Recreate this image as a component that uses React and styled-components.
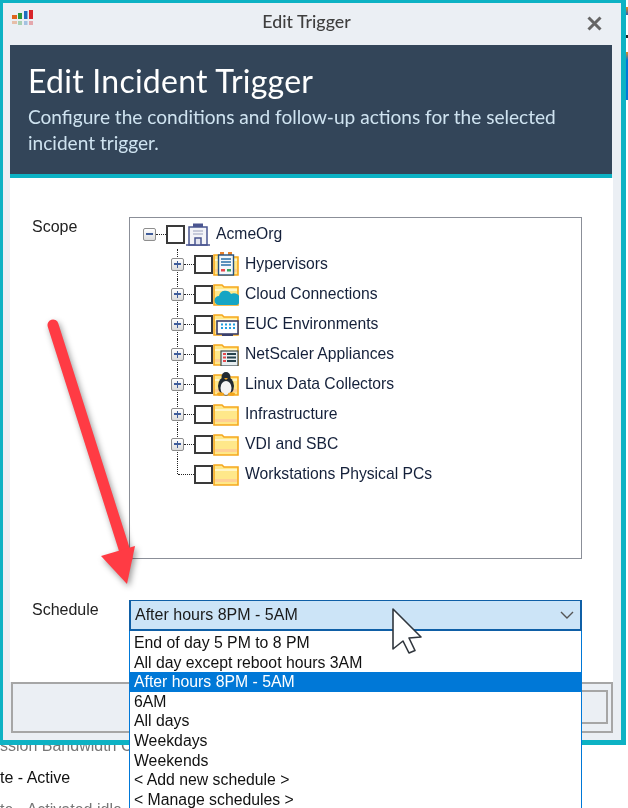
import React from "react";
import styled, { createGlobalStyle } from "styled-components";

const Global = createGlobalStyle`
  html, body { margin: 0; padding: 0; background: #fff; overflow: hidden; }
  * { box-sizing: border-box; }
`;

const Page = styled.div`
  position: relative;
  width: 628px;
  height: 808px;
  overflow: hidden;
  background: #fff;
  font-family: "Liberation Sans", Arial, sans-serif;
  filter: blur(0.4px);
`;

const EdgeSliver = styled.div`
  position: absolute;
  top: 0;
  right: 0;
  width: 2px;
  height: 100px;
  background: linear-gradient(
    to bottom,
    #fff 0, #fff 7px, #e88a1c 7px, #2a5fb0 15px, #fff 15px,
    #fff 35px, #222 35px, #222 38px, #fff 38px,
    #fff 52px, #e88a1c 52px, #0078d7 60px, #0078d7 100px
  );
`;

const Window = styled.div`
  position: relative;
  z-index: 1;
  width: 626px;
  height: 745px;
  border: solid #0db2c4;
  border-width: 3px 5px 5px 3px;
  background: #ebeff4;
  display: flex;
  flex-direction: column;
`;

const TitleBar = styled.div`
  height: 42px;
  flex: none;
  display: flex;
  align-items: center;
  padding: 0 19px 0 8px;
`;

const Logo = styled.svg`
  width: 23px;
  height: 20px;
  flex: none;
  margin-bottom: 12px;
`;

const WindowTitle = styled.div`
  flex: 1;
  text-align: center;
  padding: 0 8px 6px 0;
  font-family: Lato, sans-serif;
  font-size: 17.8px;
  font-weight: 500;
  color: #3f3f3f;
`;

const Close = styled.svg`
  width: 15px;
  height: 15px;
  flex: none;
  margin-bottom: 2px;
`;

const Banner = styled.header`
  flex: none;
  height: 133px;
  margin: 0 9px 0 7px;
  padding: 17px 18px 0;
  background: #334559;
  border-bottom: 4px solid #0db2c4;
`;

const BannerTitle = styled.h1`
  margin: 0;
  font-family: Lato, sans-serif;
  font-size: 32px;
  letter-spacing: 0.25px;
  line-height: 38px;
  font-weight: 400;
  color: #fff;
`;

const BannerText = styled.p`
  margin: 4px 0 0;
  width: 560px;
  font-family: Lato, sans-serif;
  font-size: 19.08px;
  line-height: 26px;
  color: #cfe3f0;
`;

const Content = styled.main`
  flex: 1;
  margin: 0 8px 0 7px;
  padding: 39px 0 0 22px;
  background: #fff;
  display: grid;
  grid-template-columns: 97px 453px;
  grid-template-rows: 342px 31px;
  row-gap: 41px;
  align-content: start;
`;

const FieldLabel = styled.div`
  font-size: 16px;
  line-height: 18px;
  color: #222;
  padding-top: ${(p) => p.$top}px;
`;

const Tree = styled.div`
  border: 1px solid #8b8f98;
  padding-top: 1px;
  background: #fff;
`;

const Row = styled.div`
  position: relative;
  height: 30px;
  display: flex;
  align-items: center;
  padding-left: ${(p) => (p.$root ? 13 : 41)}px;
  &::before {
    content: ${(p) => (p.$root ? "none" : '""')};
    position: absolute;
    left: 47px;
    top: 0;
    height: ${(p) => (p.$last ? "15px" : "30px")};
    border-left: 1px dotted #222;
  }
`;

const Expander = styled.span`
  position: relative;
  z-index: 1;
  width: 13px;
  height: 13px;
  flex: none;
  border: 1px solid #8e8e8e;
  border-radius: 2px;
  background: linear-gradient(#fff, #dcdcdc);
  display: flex;
  align-items: center;
  justify-content: center;
  &::before {
    content: "";
    position: absolute;
    width: 7px;
    height: 1.6px;
    background: #3f5c9a;
  }
  &::after {
    content: ${(p) => (p.$open ? "none" : '""')};
    position: absolute;
    width: 1.6px;
    height: 7px;
    background: #3f5c9a;
  }
`;

const Dots = styled.span`
  width: ${(p) => p.$w}px;
  flex: none;
  margin-left: ${(p) => p.$offset || 0}px;
  border-top: 1px dotted #222;
`;

const Check = styled.span`
  width: 19px;
  height: 19px;
  flex: none;
  border: 2px solid #3a3a3a;
  background: #fff;
`;

const IconSlot = styled.svg`
  width: ${(p) => (p.$root ? 24 : 26)}px;
  height: 24px;
  flex: none;
  margin-left: ${(p) => (p.$root ? 1 : 0)}px;
`;

const NodeLabel = styled.span`
  margin-left: ${(p) => (p.$root ? 6 : 6)}px;
  font-size: 15.7px;
  color: #14203a;
  white-space: nowrap;
`;

const SelectWrap = styled.div`
  position: relative;
  z-index: 2;
`;

const Select = styled.div`
  height: 31px;
  border: 2px solid #0f5fa6;
  border-top-width: 1px;
  background: #cce4f7;
  display: flex;
  align-items: center;
  justify-content: space-between;
  padding: 0 6px 0 4px;
  font-size: 16px;
  color: #1a1a1a;
`;

const Chevron = styled.svg`
  width: 14px;
  height: 8px;
  flex: none;
`;

const DropList = styled.ul`
  position: absolute;
  top: 31px;
  left: 0;
  width: 453px;
  height: 190px;
  margin: 0;
  padding: 2px 0 0;
  list-style: none;
  background: #fff;
  border: solid #0078d7;
  border-width: 0 1px 0 1px;
`;

const DropItem = styled.li`
  height: 19.6px;
  line-height: 19.6px;
  padding-left: 4px;
  font-size: 15.8px;
  white-space: nowrap;
  color: ${(p) => (p.$active ? "#fff" : "#111")};
  background: ${(p) => (p.$active ? "#0078d7" : "transparent")};
`;

const Footer = styled.footer`
  flex: none;
  height: 51px;
  margin: 0 8px 7px 8px;
  border: 2px solid #a6a6a6;
  padding: 6px 3px 7px 200px;
  display: flex;
`;

const FooterButton = styled.div`
  flex: 1;
  border: 2px solid #a6a6a6;
  background: #ebeff4;
`;

const Behind = styled.div`
  margin-top: -15px;
  font-size: 16px;
  line-height: 32px;
`;

const BehindLine = styled.div`
  height: 32px;
  color: ${(p) => p.$color};
  white-space: nowrap;
`;

const RedArrow = styled.svg`
  position: absolute;
  z-index: 3;
  left: 40px;
  top: 310px;
  width: 110px;
  height: 290px;
  filter: drop-shadow(2px 3px 3px rgba(0, 0, 0, 0.4));
`;

const Pointer = styled.svg`
  position: absolute;
  z-index: 4;
  left: 390px;
  top: 606px;
  width: 36px;
  height: 50px;
`;

const Folder = () => (
  <>
    <path d="M1 7V3h8l2 2h14v18H1z" fill="#ffe88a" stroke="#f6a81e" strokeWidth="1.6" />
    <rect x="2" y="7" width="22" height="2" fill="#fff6c8" />
    <rect x="2" y="17" width="22" height="3" fill="#ffcf94" />
  </>
);

const Overlays = {
  plain: null,
  hyper: (
    <>
      <rect x="7" y="0" width="4" height="3" fill="#e8802a" />
      <rect x="15" y="0" width="4" height="3" fill="#e8802a" />
      <rect x="5.5" y="3" width="15" height="20" fill="#f4f8fb" stroke="#24507e" strokeWidth="1.4" />
      <path d="M8 7h10M8 10h10M8 13h10" stroke="#2a6fa8" strokeWidth="1.4" />
      <rect x="8" y="17" width="4" height="2.5" fill="#e5484d" />
      <rect x="14" y="17" width="4" height="2.5" fill="#35a55b" />
    </>
  ),
  cloud: (
    <path d="M6 23a4.5 4.5 0 0 1 0-9 6.5 6.5 0 0 1 12-2 5.5 5.500 0 0 1 6 11z" fill="#16a5c4" />
  ),
  euc: (
    <>
      <rect x="4" y="9" width="21" height="13" fill="#fdfdff" stroke="#3a3f6b" strokeWidth="1.6" />
      <path d="M8 12.5h2M12 12.5h2M16 12.5h2M20 12.5h2M8 16h2M12 16h2M16 16h2M20 16h2" stroke="#1f9fe0" strokeWidth="2" />
      <rect x="9" y="22" width="11" height="2" fill="#3a3f6b" />
    </>
  ),
  net: (
    <>
      <rect x="8" y="9" width="17" height="15" fill="#e8eef0" stroke="#3d4a4f" strokeWidth="1.2" />
      <path d="M10 12h3M10 15.5h3M10 19h3" stroke="#e5484d" strokeWidth="2" />
      <path d="M14 12h9M14 15.5h9M14 19h9" stroke="#26424c" strokeWidth="2" />
    </>
  ),
  linux: (
    <>
      <ellipse cx="13" cy="14" rx="8" ry="9.5" fill="#222b33" />
      <ellipse cx="13" cy="5" rx="4.500" ry="5" fill="#222b33" />
      <ellipse cx="13" cy="16" rx="5.5" ry="7" fill="#f4f4f4" />
      <path d="M11 6h4l-2 2z" fill="#f2a51f" />
      <ellipse cx="7.5" cy="22" rx="3.5" ry="1.8" fill="#f2a51f" />
      <ellipse cx="18.5" cy="22" rx="3.5" ry="1.8" fill="#f2a51f" />
    </>
  ),
};

const nodes = [
  ["Hypervisors", "hyper"],
  ["Cloud Connections", "cloud"],
  ["EUC Environments", "euc"],
  ["NetScaler Appliances", "net"],
  ["Linux Data Collectors", "linux"],
  ["Infrastructure", "plain"],
  ["VDI and SBC", "plain"],
  ["Workstations Physical PCs", "plain"],
];

const schedules = [
  "End of day 5 PM to 8 PM",
  "All day except reboot hours 3AM",
  "After hours 8PM - 5AM",
  "6AM",
  "All days",
  "Weekdays",
  "Weekends",
  "< Add new schedule >",
  "< Manage schedules >",
];

export default function App() {
  return (
    <Page>
      <Global />
      <EdgeSliver />
      <Window>
        <TitleBar>
          <Logo viewBox="0 0 23 20">
            <rect x="1" y="7" width="5" height="4" fill="#e0651c" />
            <rect x="7" y="5" width="4" height="6" fill="#2c9a3f" />
            <rect x="13" y="3" width="3.5" height="8" fill="#1f6fc0" />
            <rect x="18" y="2" width="4" height="9" fill="#d8232a" />
            <g opacity="0.35">
              <rect x="1" y="13" width="5" height="3" fill="#e0651c" />
              <rect x="7" y="13" width="4" height="4" fill="#2c9a3f" />
              <rect x="13" y="13" width="3.5" height="4" fill="#1f6fc0" />
              <rect x="18" y="13" width="4" height="4" fill="#d8232a" />
            </g>
          </Logo>
          <WindowTitle>Edit Trigger</WindowTitle>
          <Close viewBox="0 0 15 15">
            <path d="M1.5 1.5l12 12M13.5 1.5l-12 12" stroke="#666" strokeWidth="3" fill="none" />
          </Close>
        </TitleBar>
        <Banner>
          <BannerTitle>Edit Incident Trigger</BannerTitle>
          <BannerText>Configure the conditions and follow-up actions for the selected incident trigger.</BannerText>
        </Banner>
        <Content>
          <FieldLabel $top={1}>Scope</FieldLabel>
          <Tree>
            <Row $root>
              <Expander $open />
              <Dots $w={10} />
              <Check />
              <IconSlot $root viewBox="0 0 24 24">
                <path d="M3 23V5h18v18z" fill="#f3f4f8" stroke="#4a5590" strokeWidth="1.5" />
                <rect x="7" y="1.5" width="10" height="3.5" fill="#4a5590" />
                <path d="M7 9h10M7 12h10" stroke="#b8bcd0" strokeWidth="1.5" />
                <path d="M9 23v-7h6v7" fill="#e4e6f0" stroke="#4a5590" strokeWidth="1.5" />
                <path d="M0 23h24" stroke="#4a5590" strokeWidth="1.5" />
              </IconSlot>
              <NodeLabel $root>AcmeOrg</NodeLabel>
            </Row>
            {nodes.map(([label, icon], i) => {
              const last = i === nodes.length - 1;
              return (
                <Row key={label} $last={last}>
                  {last ? <Dots $w={16} $offset={7} /> : <Expander />}
                  {!last && <Dots $w={10} />}
                  <Check />
                  <IconSlot viewBox="0 0 26 24">
                    <Folder />
                    {Overlays[icon]}
                  </IconSlot>
                  <NodeLabel>{label}</NodeLabel>
                </Row>
              );
            })}
          </Tree>
          <FieldLabel $top={1}>Schedule</FieldLabel>
          <SelectWrap>
            <Select>
              After hours 8PM - 5AM
              <Chevron viewBox="0 0 14 8">
                <path d="M1 1l6 6 6-6" stroke="#555" strokeWidth="1.4" fill="none" />
              </Chevron>
            </Select>
            <DropList>
              {schedules.map((s) => (
                <DropItem key={s} $active={s === "After hours 8PM - 5AM"}>
                  {s}
                </DropItem>
              ))}
            </DropList>
          </SelectWrap>
        </Content>
        <Footer>
          <FooterButton />
        </Footer>
      </Window>
      <Behind>
        <BehindLine $color="#777">ssion Bandwidth C</BehindLine>
        <BehindLine $color="#111">te - Active</BehindLine>
        <BehindLine $color="#777">te - Activated idle</BehindLine>
      </Behind>
      <RedArrow viewBox="0 0 110 290">
        <path d="M13 15L87 248" stroke="#ff3b44" strokeWidth="11" strokeLinecap="round" fill="none" />
        <path d="M95 236L61 246L87 274z" fill="#ff3b44" />
      </RedArrow>
      <Pointer viewBox="0 0 36 50">
        <path
          d="M3 3V43L13 35L19 47L25 44.5L19 32L31 31z"
          fill="#fff"
          stroke="#30363d"
          strokeWidth="1.6"
          strokeLinejoin="round"
        />
      </Pointer>
    </Page>
  );
}
